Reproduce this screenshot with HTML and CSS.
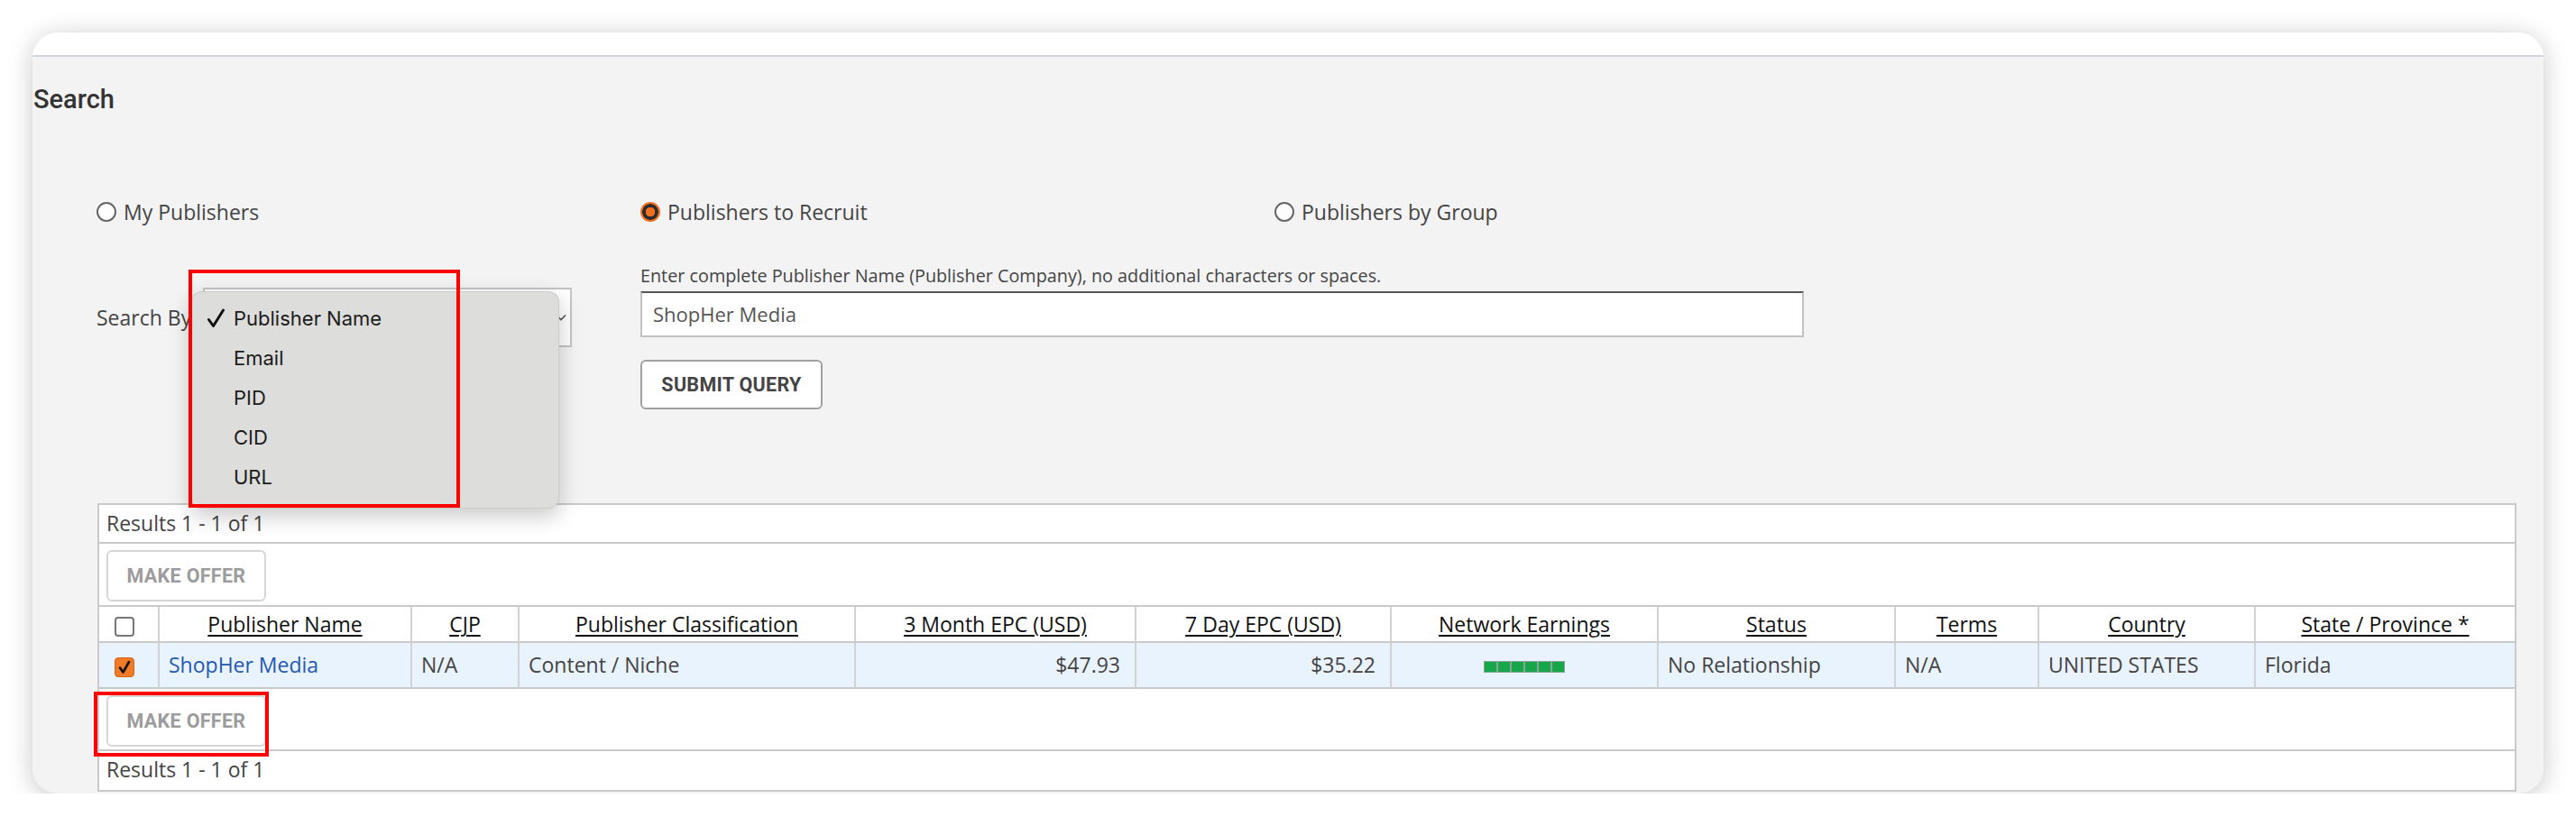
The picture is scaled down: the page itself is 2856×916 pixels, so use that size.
FILE: index.html
```html
<!DOCTYPE html>
<html lang="en">
<head>
    <meta charset="UTF-8">
    <title>Search Publishers</title>
    <link rel="stylesheet" href="styles.css">
</head>
<body>
<div class="window">
    <div class="topbar"></div>
    <div class="page">
        <h1>Search</h1>

        <div class="form">
            <div class="radios">
                <label class="opt opt-1"><span class="radio"></span>My Publishers</label>
                <label class="opt opt-2"><span class="radio on"></span>Publishers to Recruit</label>
                <label class="opt"><span class="radio"></span>Publishers by Group</label>
            </div>

            <div class="search-row">
                <div class="search-by">
                    <span class="lbl">Search By</span>
                    <div class="select">
                        <svg class="chev" width="12" height="8" viewBox="0 0 12 8"><path d="M1 1.5 6 6.5 11 1.5" fill="none" stroke="#555" stroke-width="1.6"/></svg>
                    </div>

                    <!-- open native popup -->
                    <div class="menu">
                        <div class="item"><span class="tick"><svg width="19" height="22" viewBox="0 0 19 22"><path d="M1.5 12.5 6.5 19.5 17.5 2" fill="none" stroke="#111" stroke-width="3" stroke-linecap="round" stroke-linejoin="round"/></svg></span>Publisher Name</div>
                        <div class="item"><span class="tick"></span>Email</div>
                        <div class="item"><span class="tick"></span>PID</div>
                        <div class="item"><span class="tick"></span>CID</div>
                        <div class="item"><span class="tick"></span>URL</div>
                    </div>
                    <div class="mark mark-menu"></div>
                </div>

                <div class="query">
                    <p class="hint">Enter complete Publisher Name (Publisher Company), no additional characters or spaces.</p>
                    <div class="input">ShopHer Media</div>
                    <button class="btn">SUBMIT QUERY</button>
                </div>
            </div>
        </div>

        <div class="results">
            <div class="count">Results 1 - 1 of 1</div>
            <div class="actions"><button class="btn btn-off">MAKE OFFER</button></div>

            <table class="grid">
                <colgroup>
                    <col style="width:65px"><col style="width:280px"><col style="width:119px"><col style="width:373px">
                    <col style="width:311px"><col style="width:283px"><col style="width:296px"><col style="width:263px">
                    <col style="width:159px"><col style="width:240px"><col>
                </colgroup>
                <thead>
                    <tr>
                        <th class="chk"><span class="box"></span></th>
                        <th><u>Publisher Name</u></th>
                        <th><u>CJP</u></th>
                        <th><u>Publisher Classification</u></th>
                        <th><u>3 Month EPC (USD)</u></th>
                        <th><u>7 Day EPC (USD)</u></th>
                        <th><u>Network Earnings</u></th>
                        <th><u>Status</u></th>
                        <th><u>Terms</u></th>
                        <th><u>Country</u></th>
                        <th><u>State / Province *</u></th>
                    </tr>
                </thead>
                <tbody>
                    <tr>
                        <td class="chk"><span class="box on"><svg width="14" height="16" viewBox="0 0 14 16"><path d="M2 8.5 5.5 13.5 12 2" fill="none" stroke="#111" stroke-width="2.6" stroke-linecap="round" stroke-linejoin="round"/></svg></span></td>
                        <td><a href="#">ShopHer Media</a></td>
                        <td>N/A</td>
                        <td>Content / Niche</td>
                        <td class="num">$47.93</td>
                        <td class="num">$35.22</td>
                        <td class="mid"><span class="bar"><i></i><i></i><i></i><i></i><i></i><i></i></span></td>
                        <td>No Relationship</td>
                        <td>N/A</td>
                        <td>UNITED STATES</td>
                        <td>Florida</td>
                    </tr>
                </tbody>
            </table>

            <div class="actions"><button class="btn btn-off">MAKE OFFER</button></div>
            <div class="count last">Results 1 - 1 of 1</div>

            <div class="mark mark-offer"></div>
        </div>
    </div>
</div>
</body>
</html>
```

FILE: styles.css
```css
*{
    box-sizing: border-box;
}
body{
    margin: 0;
    background: #fff;
    font-family: "Open Sans", "Liberation Sans", sans-serif;
    color: #444;
}

.window{
    margin: 36px 0 0 36px;
    width: 2784px;
    height: 844px;
    border-radius: 28px;
    overflow: hidden;
    background: #f3f3f3;
    box-shadow: 0 4px 28px rgba(0, 0, 0, .22);
}
.topbar{
    height: 27px;
    background: #fff;
    border-bottom: 2px solid #cfd6dd;
}

h1{
    margin: 30px 0 0 1px;
    font: 500 29px/35px Roboto, sans-serif;
    color: #333;
}

.form{
    padding-left: 71px;
}

/* radio choices */
.radios{
    margin-top: 92px;
    display: flex;
    align-items: center;
    height: 30px;
    font-size: 23px;
    line-height: 30px;
}
.opt{
    display: flex;
    align-items: center;
    gap: 8px;
}
.opt-1{ width: 603px; }
.opt-2{ width: 703px; }
.radio{
    width: 22px;
    height: 22px;
    border-radius: 50%;
    background: #fff;
    border: 2px solid #666;
}
.radio.on{
    border: none;
    background: radial-gradient(circle, #f07020 0 5px, #2c2c2c 5.5px 8.5px, #f07020 9px);
}

/* search by + query */
.search-row{
    margin-top: 43px;
    display: flex;
}
.search-by{
    position: relative;
    width: 603px;
    padding-top: 26px;
    display: flex;
    align-items: flex-start;
}
.lbl{
    width: 118px;
    height: 66px;
    font-size: 23px;
    line-height: 66px;
}
.select{
    position: relative;
    width: 409px;
    height: 66px;
    background: #fff;
    border: 2px solid #c4c4c4;
}
.chev{
    position: absolute;
    right: 4px;
    top: 27px;
}
.menu{
    position: absolute;
    left: 105px;
    top: 30px;
    width: 408px;
    height: 241px;
    padding-top: 7px;
    background: #dddddb;
    border: 1px solid rgba(0, 0, 0, .08);
    border-radius: 12px;
    box-shadow: 0 8px 24px rgba(0, 0, 0, .22);
    font-family: Inter, "Noto Sans", sans-serif;
    font-size: 22px;
    color: #1c1c1c;
    z-index: 2;
}
.item{
    display: flex;
    align-items: center;
    height: 44px;
    padding-left: 17px;
}
.tick{
    width: 29px;
    display: flex;
}
.mark{
    position: absolute;
    border: 4px solid #f00;
    z-index: 3;
}
.mark-menu{
    left: 102px;
    top: 6px;
    width: 301px;
    height: 264px;
}

.query{
    display: flex;
    flex-direction: column;
    align-items: flex-start;
}
.hint{
    margin: 0;
    font-size: 19.8px;
    line-height: 26px;
}
.input{
    margin-top: 4px;
    width: 1290px;
    height: 51px;
    padding-left: 12px;
    background: #fff;
    border: 2px solid #c2c2c2;
    border-top-color: #555;
    font-size: 22px;
    line-height: 47px;
    color: #555;
}
.btn{
    margin-top: 25px;
    width: 202px;
    height: 55px;
    background: #fff;
    border: 2px solid #a0a0a0;
    border-radius: 6px;
    font: 700 21.5px Roboto, sans-serif;
    color: #444;
    letter-spacing: .3px;
    padding: 0;
}

/* results box */
.results{
    position: relative;
    margin: 104px 0 0 72px;
    width: 2682px;
    background: #fff;
    border: 2px solid #cacaca;
    border-bottom: none;
}
.count{
    height: 43px;
    padding-left: 8px;
    border-bottom: 2px solid #cacaca;
    font-size: 23px;
    line-height: 41px;
}
.count.last{
    height: 45px;
}
.actions{
    height: 70px;
    padding: 7px 0 0 8px;
    border-bottom: 2px solid #cacaca;
}
.grid + .actions{
    height: 69px;
}
.btn-off{
    margin: 0;
    width: 177px;
    height: 57px;
    border-color: #d6d6d6;
    color: #9c9c9c;
}
.mark-offer{
    left: -6px;
    top: 207px;
    width: 194px;
    height: 72px;
}

.grid{
    width: 100%;
    table-layout: fixed;
    border-collapse: separate;
    border-spacing: 0;
    font-size: 23px;
}
.grid th,
.grid td{
    padding: 0 10px;
    border-left: 2px solid #d2d2d2;
    border-bottom: 2px solid #cacaca;
    text-align: left;
    white-space: nowrap;
    overflow: hidden;
}
.grid th:first-child,
.grid td:first-child{
    border-left: none;
}
.grid th{
    height: 40px;
    line-height: 38px;
    text-align: center;
    font-weight: 400;
    color: #111;
}
.grid u{
    text-decoration-thickness: 2px;
    text-underline-offset: 3px;
}
.grid td{
    height: 51px;
    line-height: 49px;
    background: #e9f3fd;
    color: #444;
}
.grid .chk{
    text-align: left;
    padding-left: 17px;
}
.grid .num{
    text-align: right;
    padding-right: 16px;
}
.grid .mid{
    text-align: center;
}
.grid a{
    color: #2459b3;
    text-decoration: none;
}
.box{
    display: inline-flex;
    align-items: center;
    justify-content: center;
    width: 22px;
    height: 22px;
    vertical-align: middle;
    border: 2px solid #777;
    border-radius: 4px;
    background: #fff;
}
.box.on{
    border: 1px solid #d86418;
    background: #f07a26;
}
.bar{
    display: inline-flex;
    gap: 2px;
    width: 90px;
    height: 13px;
    padding: 1px;
    vertical-align: middle;
    background: #8aa596;
}
.bar i{
    flex: 1;
    background: #17a64a;
}
```
